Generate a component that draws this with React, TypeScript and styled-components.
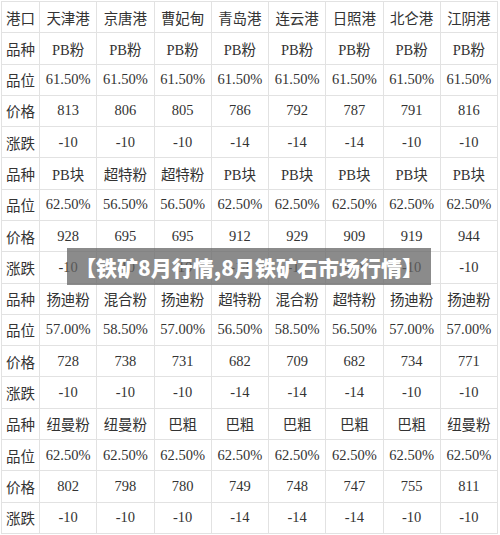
import styled, { createGlobalStyle } from "styled-components";

const GlobalStyle = createGlobalStyle`
  html, body {
    margin: 0;
    padding: 0;
    background: #fff;
  }
`;

const Page = styled.div`
  position: relative;
  width: 500px;
  height: 535px;
  padding: 1px 2px 1px 1px;
  box-sizing: border-box;
`;

const Table = styled.table`
  width: 497px;
  height: 533px;
  border-collapse: collapse;
  table-layout: fixed;
  font-family: "Liberation Serif", "Noto Sans CJK SC", serif;
  font-size: 14.5px;
  color: #333;
`;

const LabelCol = styled.col`
  width: 38px;
`;

const Cell = styled.td`
  border: 1px solid #e2e2e2;
  padding: 0;
  text-align: center;
  vertical-align: middle;
  white-space: nowrap;
  overflow: hidden;
`;

const Banner = styled.div`
  position: absolute;
  left: 67px;
  top: 248px;
  width: 364px;
  height: 37px;
  display: flex;
  align-items: center;
  justify-content: center;
  background: rgba(98, 98, 98, 0.74);
  color: #fff;
  font-family: "Noto Sans CJK SC", "Noto Sans", sans-serif;
  font-weight: 900;
  font-size: 21px;
  white-space: nowrap;
`;

const ports = ["天津港", "京唐港", "曹妃甸", "青岛港", "连云港", "日照港", "北仑港", "江阴港"];
const change = ["-10", "-10", "-10", "-14", "-14", "-14", "-10", "-10"];

type Row = [string, string[]];

const rows: Row[] = [
  ["港口", ports],
  ["品种", Array(8).fill("PB粉")],
  ["品位", Array(8).fill("61.50%")],
  ["价格", ["813", "806", "805", "786", "792", "787", "791", "816"]],
  ["涨跌", change],
  ["品种", ["PB块", "超特粉", "超特粉", "PB块", "PB块", "PB块", "PB块", "PB块"]],
  ["品位", ["62.50%", "56.50%", "56.50%", "62.50%", "62.50%", "62.50%", "62.50%", "62.50%"]],
  ["价格", ["928", "695", "695", "912", "929", "909", "919", "944"]],
  ["涨跌", change],
  ["品种", ["扬迪粉", "混合粉", "扬迪粉", "超特粉", "混合粉", "超特粉", "扬迪粉", "扬迪粉"]],
  ["品位", ["57.00%", "58.50%", "57.00%", "56.50%", "58.50%", "56.50%", "57.00%", "57.00%"]],
  ["价格", ["728", "738", "731", "682", "709", "682", "734", "771"]],
  ["涨跌", change],
  ["品种", ["纽曼粉", "纽曼粉", "巴粗", "巴粗", "巴粗", "巴粗", "巴粗", "纽曼粉"]],
  ["品位", Array(8).fill("62.50%")],
  ["价格", ["802", "798", "780", "749", "748", "747", "755", "811"]],
  ["涨跌", change],
];

export default function App() {
  return (
    <>
      <GlobalStyle />
      <Page>
        <Table>
          <colgroup>
            <LabelCol />
            {ports.map((p) => (
              <col key={p} />
            ))}
          </colgroup>
          <tbody>
            {rows.map(([label, values], i) => (
              <tr key={i}>
                <Cell>{label}</Cell>
                {values.map((v, j) => (
                  <Cell key={j}>{v}</Cell>
                ))}
              </tr>
            ))}
          </tbody>
        </Table>
        <Banner>【铁矿8月行情,8月铁矿石市场行情】</Banner>
      </Page>
    </>
  );
}
